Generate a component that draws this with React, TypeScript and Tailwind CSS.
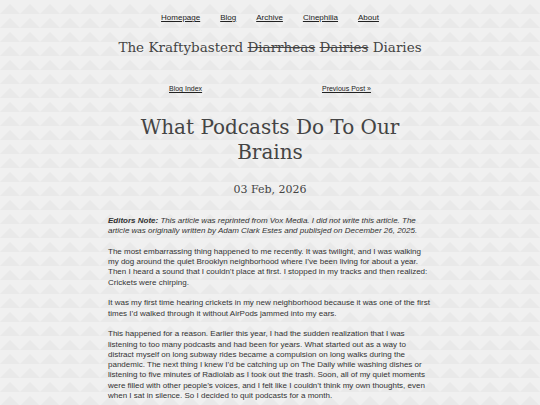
import React from "react";

const sans = { fontFamily: '"Liberation Sans", Arial, sans-serif' } as const;

function Background() {
  return (
    <svg className="absolute inset-0 w-full h-full" aria-hidden="true">
      <defs>
        <pattern id="chev" width="20" height="14" patternUnits="userSpaceOnUse">
          <rect width="20" height="14" fill="#f0f0f0" />
          <polygon points="0,14 10,4 20,14" fill="#e9e9e9" />
        </pattern>
      </defs>
      <rect width="100%" height="100%" fill="url(#chev)" />
    </svg>
  );
}

export default function App() {
  return (
    <div className="relative w-[540px] h-[405px] overflow-hidden bg-[#efefef]">
      <Background />
      <div className="relative w-[324px] mx-auto text-[#333]" style={sans}>
        <nav className="flex justify-center gap-5 pt-[13px] text-[8px] leading-[10px] text-[#222]">
          <a className="underline">Homepage</a>
          <a className="underline">Blog</a>
          <a className="underline">Archive</a>
          <a className="underline">Cinephilia</a>
          <a className="underline">About</a>
        </nav>
        <div className="mt-[16px] text-center text-[13.5px] leading-[16px] text-[#444] font-['DejaVu_Serif',serif] whitespace-nowrap -mx-10">
          The Kraftybasterd <s>Diarrheas</s> <s>Dairies</s> Diaries
        </div>
        <div className="mt-[29px] flex justify-between px-[61px] text-[7px] leading-[9px] text-[#222]">
          <a className="underline">Blog Index</a>
          <a className="underline">Previous Post »</a>
        </div>
        <h1 className="mt-[22px] text-center text-[20px] leading-[25px] text-[#444] font-['DejaVu_Serif',serif]">
          What Podcasts Do To Our Brains
        </h1>
        <div className="mt-[18px] text-center text-[11px] leading-[13px] text-[#444] font-['DejaVu_Serif',serif]">
          03 Feb, 2026
        </div>
        <div className="mt-[20px] text-[8px] leading-[10.3px]">
          <p className="italic">
            <b>Editors Note:</b> This article was reprinted from Vox Media. I did not write this article. The
            article was originally written by Adam Clark Estes and publisjed on December 26, 2025.
          </p>
          <p className="mt-[10.3px]">
            The most embarrassing thing happened to me recently. It was twilight, and I was walking my dog around the quiet Brooklyn neighborhood where I’ve been living for about a year. Then I heard a sound that I couldn’t place at first. I stopped in my tracks and then realized: Crickets were chirping.
          </p>
          <p className="mt-[10.3px]">
            It was my first time hearing crickets in my new neighborhood because it was one of the first times I’d walked through it without AirPods jammed into my ears.
          </p>
          <p className="mt-[10.3px]">
            This happened for a reason. Earlier this year, I had the sudden realization that I was listening to too many podcasts and had been for years. What started out as a way to distract myself on long subway rides became a compulsion on long walks during the pandemic. The next thing I knew I’d be catching up on The Daily while washing dishes or listening to five minutes of Radiolab as I took out the trash. Soon, all of my quiet moments were filled with other people’s voices, and I felt like I couldn’t think my own thoughts, even when I sat in silence. So I decided to quit podcasts for a month.
          </p>
        </div>
      </div>
    </div>
  );
}
